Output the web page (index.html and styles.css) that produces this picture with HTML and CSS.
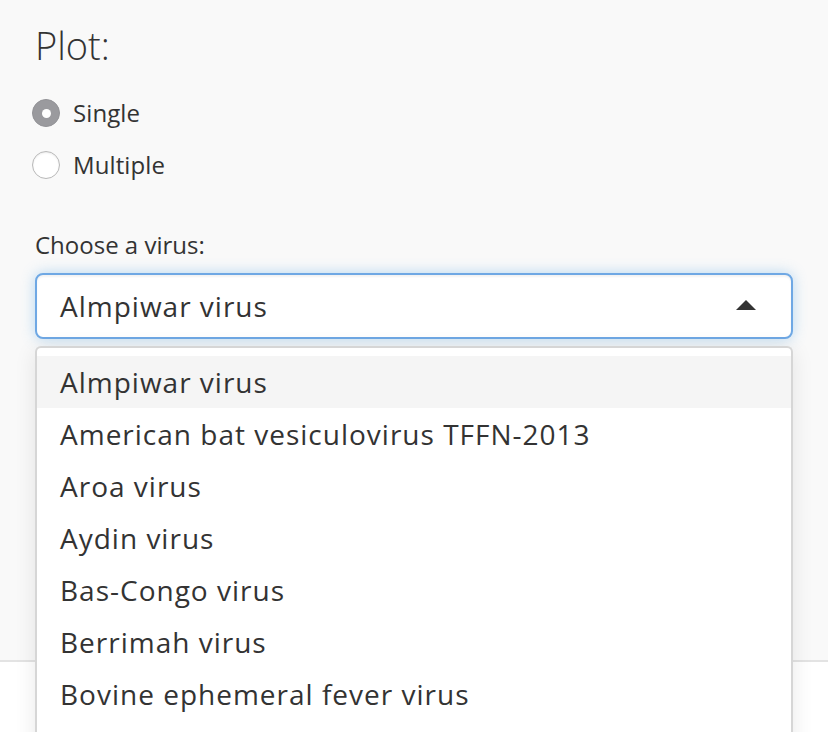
FILE: index.html
```html
<!DOCTYPE html>
<html>
<head>
<meta charset="utf-8">
<link rel="stylesheet" href="styles.css">
</head>
<body>
<div class="well">
  <div class="title">Plot:</div>
  <div class="radios">
    <div class="radio-row"><span class="radio checked"></span><span class="radio-label">Single</span></div>
    <div class="radio-row"><span class="radio"></span><span class="radio-label">Multiple</span></div>
  </div>
  <div class="field-label">Choose a virus:</div>
  <div class="select-wrap">
    <div class="select">
      <span class="select-value">Almpiwar virus</span>
      <span class="caret"></span>
    </div>
    <div class="dropdown">
      <div class="option active">Almpiwar virus</div>
      <div class="option">American bat vesiculovirus TFFN-2013</div>
      <div class="option">Aroa virus</div>
      <div class="option">Aydin virus</div>
      <div class="option">Bas-Congo virus</div>
      <div class="option">Berrimah virus</div>
      <div class="option">Bovine ephemeral fever virus</div>
    </div>
  </div>
</div>
<div class="main"></div>
</body>
</html>
```
FILE: styles.css
```css
html, body {
  margin: 0;
  padding: 0;
  height: 732px;
  overflow: hidden;
  background: #ffffff;
  font-family: "Open Sans", "DejaVu Sans", sans-serif;
  color: #333333;
}
.well {
  box-sizing: border-box;
  height: 662px;
  background: #f9f9f9;
  border-bottom: 2px solid #e3e3e3;
  padding: 21px 35px 0 35px;
}
.title {
  font-size: 38px;
  font-weight: 300;
  line-height: 48px;
  height: 48px;
  margin-bottom: 18px;
}
.radios {
  display: flex;
  flex-direction: column;
}
.radio-row {
  display: flex;
  align-items: center;
  height: 52px;
  margin-left: -3px;
}
.radio {
  box-sizing: border-box;
  width: 28px;
  height: 28px;
  border-radius: 50%;
  background: #ffffff;
  border: 1px solid #b8b8b8;
  box-shadow: inset 0 1px 2px rgba(0,0,0,0.08);
  margin-right: 13px;
  display: flex;
  align-items: center;
  justify-content: center;
  flex: none;
}
.radio.checked {
  background: #9a9a9e;
  border-color: #939397;
  box-shadow: none;
}
.radio.checked::after {
  content: "";
  width: 9px;
  height: 9px;
  border-radius: 50%;
  background: #ffffff;
}
.radio-label {
  font-size: 24px;
  line-height: 52px;
  letter-spacing: 0.1px;
}
.field-label {
  margin-top: 37px;
  font-size: 24px;
  line-height: 34px;
  height: 34px;
  margin-bottom: 11px;
}
.select-wrap {
  position: relative;
}
.select {
  box-sizing: border-box;
  height: 66px;
  background: #ffffff;
  border: 2px solid #6fa8e4;
  border-radius: 8px;
  box-shadow: inset 0 2px 2px rgba(0,0,0,0.05), 0 0 14px rgba(102,175,233,0.45);
  display: flex;
  align-items: center;
  justify-content: space-between;
  padding: 0 35px 0 23px;
}
.select-value {
  font-size: 28px;
  line-height: 62px;
  letter-spacing: 1px;
}
.caret {
  width: 0;
  height: 0;
  border-left: 10px solid transparent;
  border-right: 10px solid transparent;
  border-bottom: 10px solid #333333;
  margin-top: -3px;
}
.dropdown {
  position: absolute;
  left: 0;
  right: 0;
  top: calc(100% + 7px);
  box-sizing: border-box;
  background: #ffffff;
  border: 2px solid #d6d6d6;
  border-bottom: none;
  border-radius: 6px 6px 0 0;
  box-shadow: 0 4px 22px rgba(0,0,0,0.09);
  padding-top: 8px;
  height: 420px;
  overflow: hidden;
}
.option {
  font-size: 28px;
  line-height: 52px;
  height: 52px;
  padding: 0 23px;
  white-space: nowrap;
  letter-spacing: 1px;
}
.option.active {
  background: #f5f5f5;
}
.main {
  height: 70px;
}
```
